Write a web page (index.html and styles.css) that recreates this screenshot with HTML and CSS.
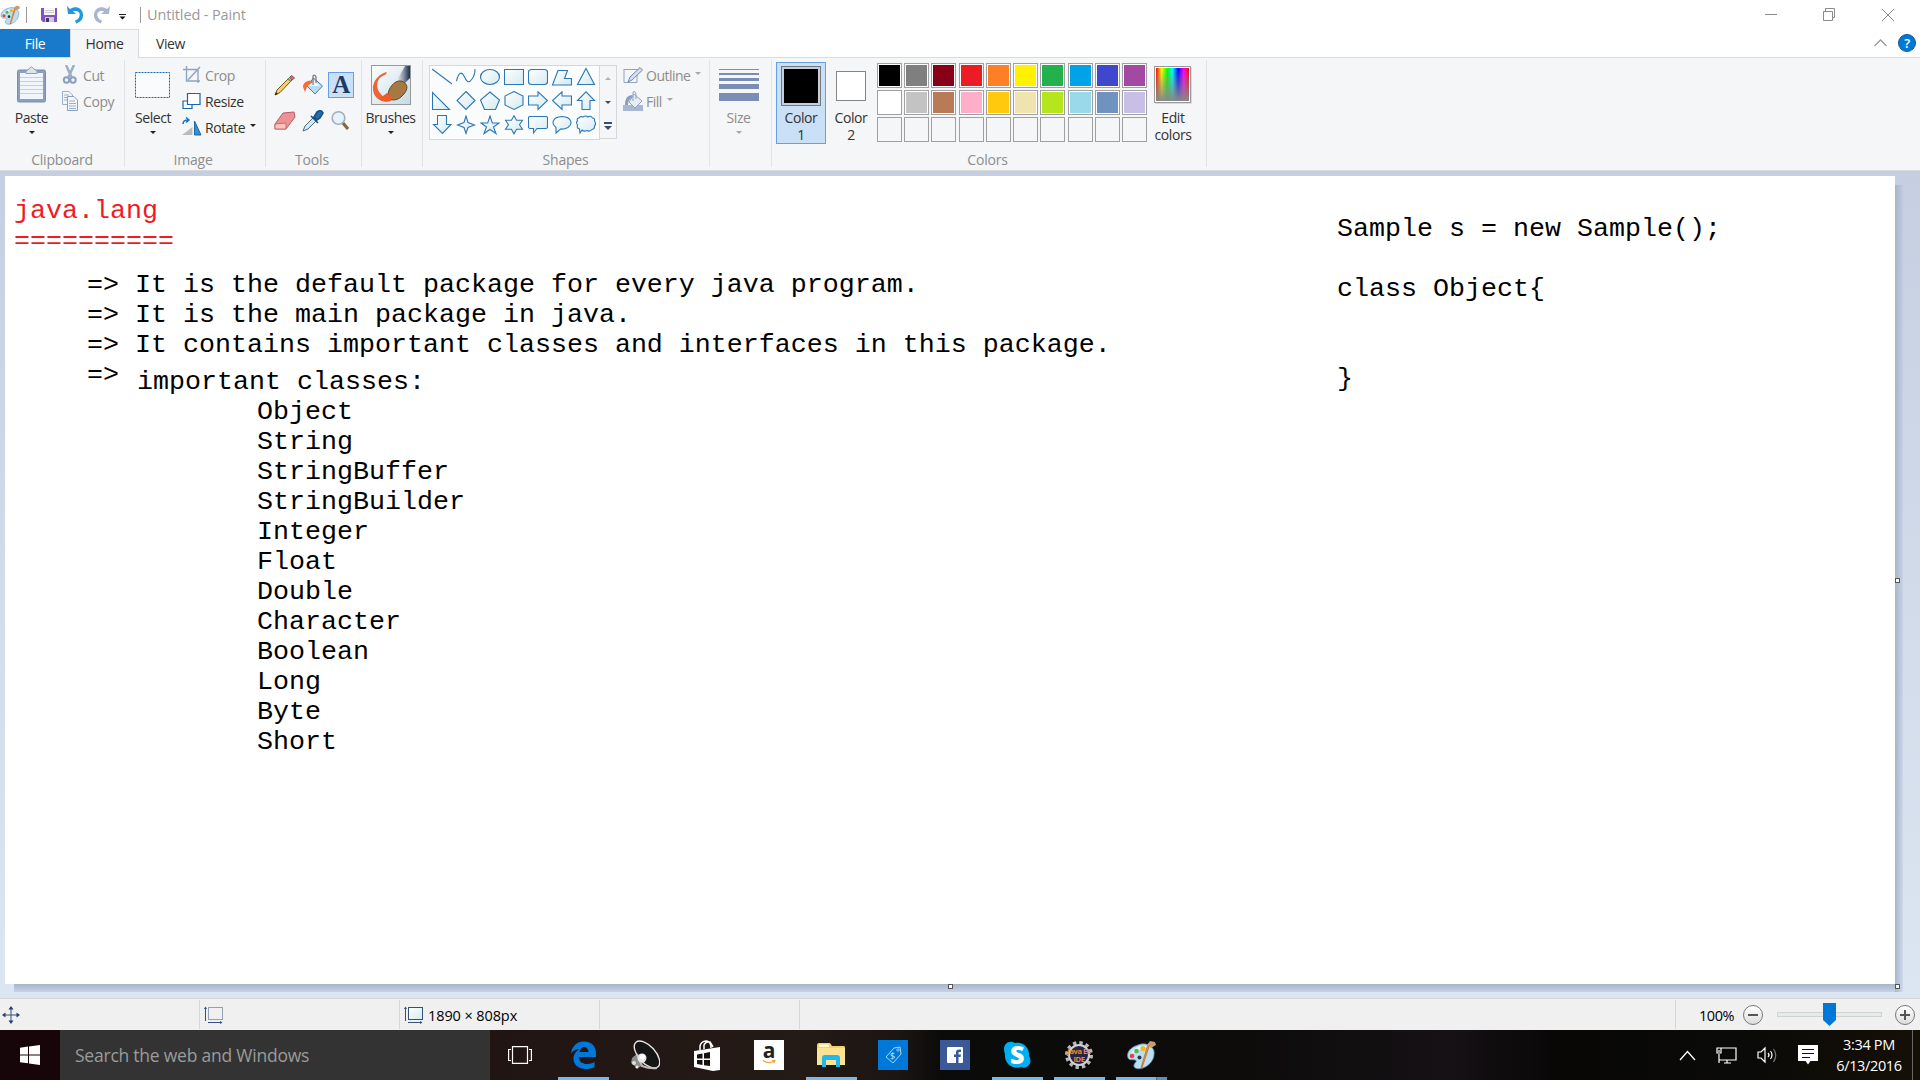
FILE: index.html
```html
<!DOCTYPE html>
<html lang="en">
<head>
<meta charset="utf-8">
<title>Untitled - Paint</title>
<link rel="stylesheet" href="styles.css">
</head>
<body>
<svg width="0" height="0" class="defs">
  <defs>
    <linearGradient id="shapeFill" x1="0" y1="0" x2="1" y2="1"><stop offset="0" stop-color="#fff"/><stop offset="1" stop-color="#d3eaf0"/></linearGradient>
    <linearGradient id="hue"><stop offset="0" stop-color="#f00"/><stop offset=".17" stop-color="#ff0"/><stop offset=".34" stop-color="#0f0"/><stop offset=".5" stop-color="#0ff"/><stop offset=".67" stop-color="#00f"/><stop offset=".84" stop-color="#f0f"/><stop offset="1" stop-color="#f00"/></linearGradient>
    <linearGradient id="fade" x1="0" y1="0" x2="0" y2="1"><stop offset="0" stop-color="#888" stop-opacity="0"/><stop offset="1" stop-color="#888"/></linearGradient>
    <linearGradient id="brushBg" x1="0" y1="0" x2="1" y2="1"><stop offset="0" stop-color="#fff"/><stop offset="1" stop-color="#c4dbe5"/></linearGradient>
    <linearGradient id="metal"><stop offset="0" stop-color="#eee"/><stop offset=".5" stop-color="#8995a5"/><stop offset="1" stop-color="#182b48"/></linearGradient>
    <symbol id="palette" viewBox="0 0 30 30">
      <path d="M2 18C0 12 5 7 12 5C19 2 26 5 28 11C29 18 25 25 17 28C12 30 7 28 8 25C9 22 12 21 9 20C6 19 4 21 2 18Z" fill="#badff3" stroke="#5c8fb0" stroke-width=".8"/>
      <path d="M5 14C8 7 16 4 23 7C18 8 12 10 5 14Z" fill="#e6f6fd"/>
      <circle cx="13.500" cy="17.500" r="2" fill="#26394a"/>
      <circle cx="6" cy="16" r="2.300" fill="#e8433d"/><circle cx="10.500" cy="11" r="2.300" fill="#54b848"/><circle cx="17" cy="8.500" r="2.600" fill="#f4b42b"/>
      <path d="M24 4L16 28L15 29L15.500 26L22 4Z" fill="#ef9128" stroke="#b55b14" stroke-width=".6"/>
      <path d="M21 5L24 1L29 2L30 5L25 8Z" fill="#c39c72"/>
    </symbol>
  </defs>
</svg>
<div class="screen">
  <header class="titlebar">
    <svg class="app-icon" width="20" height="20"><use href="#palette"/></svg>
    <i class="vline"></i>
    <svg class="save" width="17" height="16" viewBox="0 0 17 16"><path d="M0 1H16V15H2L0 13Z" fill="#7e57b8"/><path d="M3 1H14V8H3Z" fill="#f6f3fa"/><path d="M4 3.500H13M4 5.500H13" stroke="#ccc"/><path d="M4 10H13V15H4Z" fill="#cfc9d8"/><path d="M5 11H8V15H5Z" fill="#4a356f"/></svg>
    <svg class="undo" width="17" height="19" viewBox="0 0 17 19"><path d="M0 1L1 9H9L6 6.500C11 5 13.500 8 12.500 11C12 13.500 10 15 8 15.500L9 18.500C14 17 16.500 13.500 16 9C15 3 9 0 3 4Z" fill="#2298dc"/></svg>
    <svg class="redo" width="17" height="19" viewBox="0 0 17 19"><path d="M17 1L16 9H8L11 6.500C6 5 3.500 8 4.500 11C5 13.500 7 15 9 15.500L8 18.500C3 17 .5 13.500 1 9C2 3 8 0 14 4Z" fill="#a8b6cf"/></svg>
    <svg class="qat" width="8" height="6" viewBox="0 0 8 6"><path d="M0 .5H7" stroke="#222"/><path d="M.5 2.500H6.500L3.500 5.500Z" fill="#111"/></svg>
    <i class="vline"></i>
    <span class="title">Untitled - Paint</span>
    <svg class="winctl" width="130" height="14" viewBox="0 0 130 14" fill="none" stroke="#8a8a8a"><path d="M0 6.500H12M60.500 1.500V.5H69.500V9.500H68M58.500 3.500H67.500V12.500H58.500ZM60.500 3V.5M117 1L129 13M129 1L117 13"/></svg>
  </header>

  <nav class="tabs">
    <span class="tab file">File</span><span class="tab home">Home</span><span class="tab view">View</span>
    <svg class="chev" width="13" height="8" viewBox="0 0 13 8"><path d="M.5 7L6.500 1L12.500 7" fill="none" stroke="#999" stroke-width="1.300"/></svg>
    <span class="help">?</span>
  </nav>

  <section class="ribbon">
    <div class="group clipboard">
      <div class="body">
        <div class="big paste"><span class="ico"><svg width="32" height="38" viewBox="0 0 32 38"><rect x="1.500" y="4" width="28" height="32" rx="1.500" fill="#8e9fbe" stroke="#7c8fb1"/><path d="M4 7H27V33H4Z" fill="#f0f4fb"/><path d="M4 11.500H27M4 15.500H27M4 19.500H27M4 23.500H27M4 27.500H27" stroke="#c3cfe2"/><path d="M10 7.500V5Q12 4 13 3Q15.500 -1 18 3Q19 4 21 5V7.500Z" fill="#dce4f0" stroke="#8e9fbe"/></svg></span><span>Paste</span><i class="arr"></i></div>
        <div class="rows">
          <div class="row off"><svg width="18" height="20" viewBox="0 0 18 20"><path d="M5 0L10.500 12M13 0L7.500 12" stroke="#9badc9" stroke-width="2.500"/><circle cx="5.500" cy="15" r="2.700" fill="none" stroke="#8a9ebf" stroke-width="2"/><circle cx="12" cy="15" r="2.700" fill="none" stroke="#8a9ebf" stroke-width="2"/></svg><span>Cut</span></div>
          <div class="row off copyrow"><svg width="18" height="20" viewBox="0 0 18 20"><path d="M1.500 .5H8L11.500 4V13.500H1.500Z" fill="#f3f6fb" stroke="#9badc9"/><path d="M3 4H8M3 6.500H9M3 9H9" stroke="#9badc9"/><path d="M6.500 5.500H13L16.500 9V19.500H6.500Z" fill="#f3f6fb" stroke="#8a9ebf"/><path d="M8 10H14M8 12.500H15M8 15H15M8 17.500H15" stroke="#9badc9"/></svg><span>Copy</span></div>
        </div>
      </div>
      <div class="label">Clipboard</div>
    </div>

    <div class="group image">
      <div class="body">
        <div class="big select"><span class="ico"><svg width="36" height="28" viewBox="0 0 36 28"><rect x=".5" y="1.500" width="34" height="25" fill="#f9fbfd" stroke="#1767ad" stroke-dasharray="2 1"/></svg></span><span>Select</span><i class="arr"></i></div>
        <div class="rows">
          <div class="row off"><svg width="20" height="20" viewBox="0 0 20 20" fill="none" stroke="#8fa3c4" stroke-width="1.400"><path d="M1 4.500H16V18M4.500 1V16H18M6 15L18 2"/></svg><span>Crop</span></div>
          <div class="row"><svg width="20" height="18" viewBox="0 0 20 18" fill="#fff" stroke="#1767ad" stroke-width="1.200"><path d="M1 9H10V16.500H1Z"/><path d="M5.500 1.500H18V12.500H5.500Z"/></svg><span>Resize</span></div>
          <div class="row"><svg width="20" height="20" viewBox="0 0 20 20"><path d="M0 18L10.500 10V18Z" fill="#bbb"/><path d="M12.500 4V18H19Z" fill="#3d8fc4" stroke="#1767ad"/><path d="M1 7C1 4 3 3 6 3M4 .5L7 3L4 5.500" fill="none" stroke="#1775c4" stroke-width="1.500"/></svg><span>Rotate</span><i class="arr"></i></div>
        </div>
      </div>
      <div class="label">Image</div>
    </div>

    <div class="group tools">
      <div class="toolgrid">
        <span><svg width="22" height="22" viewBox="0 0 22 22"><path d="M1 21L3 16L15.500 3.500L18 6L6 18.500Z" fill="#f6cf6b" stroke="#72531d"/><path d="M15.500 3.500L17.500 1.500L20.500 4L18 6Z" fill="#d7656c" stroke="#85555a"/><path d="M14 4.500L17 7.500" stroke="#69927b" stroke-width="1.500"/><path d="M1 21L2 18L4 20Z" fill="#222"/></svg></span>
        <span><svg width="22" height="22" viewBox="0 0 22 22"><path d="M11.500 4L20.500 12L13 20L5 12Z" fill="#b8dcf1" stroke="#55799a"/><path d="M7 12L12 6L18 12Z" fill="#edf8fe"/><path d="M11 11V2Q13 0 14 3V9" fill="none" stroke="#777" stroke-width="1.200"/><path d="M10 7C5 6 1 9 1 13L3 18L5 13Q6 10 10 9Z" fill="#f46e35"/></svg></span>
        <span class="textool">A</span>
        <span><svg width="22" height="20" viewBox="0 0 22 20"><path d="M9 2L20 1L21 6L12 18L1 18L1 13Z" fill="#ed9293" stroke="#b65e65"/><path d="M1 13L12 12L12 18L1 18Z" fill="#fbc3bb" stroke="#c96f70"/></svg></span>
        <span><svg width="22" height="22" viewBox="0 0 22 22"><path d="M1 21L3 16L11 8L14 11L6 19Z" fill="#d8e8f1" stroke="#456b8a"/><path d="M9 6L16 13M12 7L15 2Q19 -1 21 3L18 8L15 10Z" fill="#286da8" stroke="#175285" stroke-width="1.600"/></svg></span>
        <span><svg width="22" height="22" viewBox="0 0 22 22"><path d="M12.500 12.500L18 19" stroke="#85663d" stroke-width="3.200"/><circle cx="8.500" cy="8" r="6.300" fill="#e4f3fd" stroke="#a3aeba" stroke-width="1.600"/></svg></span>
      </div>
      <div class="label">Tools</div>
    </div>

    <div class="group brushes">
      <div class="big"><span class="ico"><svg width="40" height="40" viewBox="0 0 40 40"><rect x=".5" y=".5" width="39" height="39" fill="url(#brushBg)" stroke="#989898"/><path d="M26 15L34 1H39V13L32 20Z" fill="url(#metal)"/><path d="M16 7C9 8 1 16 2 25C3 33 10 38 18 36L13 32C7 28 4 20 8 14C11 10 15 11 16 7Z" fill="#ec6534"/><path d="M17 30C17 24 23 15 30 16C37 18 38 24 32 30C27 36 20 36 17 33Z" fill="#a87842" stroke="#664523"/><path d="M12 31L16 28Q21 31 20 36Q13 38 8 34Z" fill="#ef5a26"/></svg></span><span>Brushes</span><i class="arr"></i></div>
    </div>

    <div class="group shapes">
      <div class="body">
        <div class="gallery">
          <svg viewBox="0 0 20 20"><path d="M0 2L20 17"/></svg>
          <svg viewBox="0 0 20 20"><path class="open" d="M.5 14C3 4 6 5 8 9S12 18 16 12Q19 8 19 2"/></svg>
          <svg viewBox="0 0 20 20"><ellipse cx="10" cy="10" rx="9.500" ry="7.500"/></svg>
          <svg viewBox="0 0 20 20"><path d="M.5 2.500H19.500V17.500H.5Z"/></svg>
          <svg viewBox="0 0 20 20"><rect x=".5" y="2.500" width="19" height="15" rx="3"/></svg>
          <svg viewBox="0 0 20 20"><path d="M6 3.500H15.500L12.500 11.500H19.500V18H.5Z"/></svg>
          <svg viewBox="0 0 20 20"><path d="M10 1.500L18.500 17.500H1.500Z"/></svg>
          <svg viewBox="0 0 20 20"><path d="M.5 1.500V18.500H17.500Z"/></svg>
          <svg viewBox="0 0 20 20"><path d="M10 .5L19 9.500L10 18.500L1 9.500Z"/></svg>
          <svg viewBox="0 0 20 20"><path d="M10 1L19.500 9L15.500 18.500H4.500L.5 9Z"/></svg>
          <svg viewBox="0 0 20 20"><path d="M10 .5L19 5V14L10 18.500L1 14V5Z"/></svg>
          <svg viewBox="0 0 20 20"><path d="M.5 5H10V.8L19.500 9.500L10 18.500V14H.5Z"/></svg>
          <svg viewBox="0 0 20 20"><path d="M19.500 5H10V.8L.5 9.500L10 18.500V14H19.500Z"/></svg>
          <svg viewBox="0 0 20 20"><path d="M6 18.500V9.500H1.500L10 .8L18.500 9.500H14V18.500Z"/></svg>
          <svg viewBox="0 0 20 20"><path d="M5.500 .5H14.500V9.500H19L10.500 18.500L1.500 9.500H5.500Z"/></svg>
          <svg viewBox="0 0 20 20"><path d="M10 1L12 7.500L18.500 10L12 12.500L10 18.500L8 12.500L1.500 10L8 7.500Z"/></svg>
          <svg viewBox="0 0 20 20"><path d="M10 1L12.300 8H19L13.500 12L16 18.500L10 14.500L4 18.500L6.500 12L1 8H7.700Z"/></svg>
          <svg viewBox="0 0 20 20"><path d="M10 .8L12.600 5.200H18.500L15.500 9.800L18.500 14.300H12.600L10 18.800L7.400 14.300H1.500L4.500 9.800L1.500 5.200H7.400Z"/></svg>
          <svg viewBox="0 0 20 20"><path d="M2 1.500H18Q19.500 1.500 19.500 3V12Q19.500 13.500 18 13.500H9L5.500 18V13.500H2Q.5 13.500 .5 12V3Q.5 1.500 2 1.500Z"/></svg>
          <svg viewBox="0 0 20 20"><path d="M4 12.500C-1 9 0 2 10 1.500C20 2 21 9 16 12.500Q12 14.500 8.500 14L4 18Z"/></svg>
          <svg viewBox="0 0 20 20"><path d="M3 3Q4 1 7 2Q10 0 12 2Q15 0 16.500 3Q19 3 18.500 6Q20.500 9 18.500 11Q19 14 16 14.500Q14 17 11 15.500Q8 17 6 15L4 18L3.500 14Q.5 13.500 1.500 10Q-.5 7 1.500 6Q.5 3 3 3Z"/></svg>
        </div>
        <div class="scroll"><i class="arr up"></i><i class="arr"></i><i class="arr more"></i></div>
        <div class="rows">
          <div class="row off"><svg width="20" height="18" viewBox="0 0 20 18"><path d="M1 3.500H16M1 3V16.500H14V7" fill="none" stroke="#8fa3c4"/><path d="M5 16L7 11L17 1.500L19.500 4L9 14Z" fill="#d4deed" stroke="#7389af"/></svg><span>Outline</span><i class="arr"></i></div>
          <div class="row off fillrow"><svg width="20" height="20" viewBox="0 0 20 20"><path d="M0 14H20V20H0Z" fill="#a9b7d0"/><path d="M11 3L19 10L12 17L6 11Z" fill="#e5edf7" stroke="#8fa3c4"/><path d="M10 10V1Q12 -1 13 3V8" fill="none" stroke="#8fa3c4"/><path d="M9 4Q2 4 2 14H5Q5 8 9 7Z" fill="#8a9ebf"/></svg><span>Fill</span><i class="arr"></i></div>
        </div>
      </div>
      <div class="label">Shapes</div>
    </div>

    <div class="group size">
      <div class="big off"><span class="ico"><svg width="40" height="34" viewBox="0 0 40 34" fill="#7a8db2"><path d="M0 1H40V2H0ZM0 5H40V7H0ZM0 10H40V13H0ZM0 16H40V21H0ZM0 25H40V33H0Z"/></svg></span><span>Size</span><i class="arr"></i></div>
    </div>

    <div class="group colors">
      <div class="body">
        <div class="big color sel"><span class="ico"><b class="sw one"></b></span><span>Color</span><span>1</span></div>
        <div class="big color"><span class="ico"><b class="sw two"></b></span><span>Color</span><span>2</span></div>
        <div class="swatches">
          <i class="c-black"></i><i class="c-gray"></i><i class="c-maroon"></i><i class="c-red"></i><i class="c-orange"></i><i class="c-yellow"></i><i class="c-green"></i><i class="c-azure"></i><i class="c-indigo"></i><i class="c-purple"></i>
          <i class="c-white"></i><i class="c-silver"></i><i class="c-brown"></i><i class="c-rose"></i><i class="c-gold"></i><i class="c-cream"></i><i class="c-lime"></i><i class="c-sky"></i><i class="c-steel"></i><i class="c-lavender"></i>
          <i></i><i></i><i></i><i></i><i></i><i></i><i></i><i></i><i></i><i></i>
        </div>
        <div class="big edit"><span class="ico"><svg width="38" height="38" viewBox="0 0 38 38"><rect x="1.500" y="1.500" width="36" height="36" fill="#bbb"/><rect x=".5" y=".5" width="36" height="36" fill="#fff" stroke="#999"/><path d="M2 2H35V35H2Z" fill="url(#hue)"/><path d="M2 2H35V35H2Z" fill="url(#fade)"/></svg></span><span>Edit</span><span>colors</span></div>
      </div>
      <div class="label">Colors</div>
    </div>
  </section>

  <main class="workspace">
    <div class="canvas">
      <pre class="note red at-title">java.lang
==========</pre>
      <pre class="note at-points">=&gt; It is the default package for every java program.
=&gt; It is the main package in java.
=&gt; It contains important classes and interfaces in this package.</pre>
      <pre class="note at-arrow">=&gt;</pre>
      <pre class="note at-classes">important classes:</pre>
      <pre class="note at-list">Object
String
StringBuffer
StringBuilder
Integer
Float
Double
Character
Boolean
Long
Byte
Short</pre>
      <pre class="note at-code">Sample s = new Sample();

class Object{


}</pre>
      <i class="shade right"></i><i class="shade bottom"></i>
      <i class="handle h-right"></i><i class="handle h-bottom"></i><i class="handle h-corner"></i>
    </div>
  </main>

  <footer class="status">
    <div class="cell pos"><svg width="18" height="18" viewBox="0 0 18 18"><path d="M9 1V17M1 9H17" stroke="#33517d"/><path d="M9 0L11.500 3.500H6.500ZM9 18L11.500 14.500H6.500ZM0 9L3.500 6.500V11.500ZM18 9L14.500 6.500V11.500Z" fill="#24416e"/></svg></div>
    <div class="cell"><svg width="20" height="18" viewBox="0 0 20 18" fill="none" stroke="#33517d"><path d="M1.500 2V15M4 16.500H18"/><path d="M0 3L1.500 .5L3 3ZM16 15L18.500 16.500L16 18Z" fill="#33517d" stroke="none"/><rect x="4.500" y="1.500" width="14" height="12" stroke-dasharray="1 1"/></svg></div>
    <div class="cell"><svg width="20" height="18" viewBox="0 0 20 18" fill="none" stroke="#33517d"><path d="M1.500 2V15M4 16.500H18"/><path d="M0 3L1.500 .5L3 3ZM16 15L18.500 16.500L16 18Z" fill="#33517d" stroke="none"/><rect x="4.500" y="1.500" width="14" height="12" fill="url(#shapeFill)"/></svg><span class="dims">1890 × 808px</span></div>
    <div class="cell"></div>
    <div class="cell grow"></div>
    <div class="zoom"><span class="pct">100%</span><span class="knob"><svg width="10" height="10" viewBox="0 0 10 10"><path d="M0 5H10" stroke="#555" stroke-width="2"/></svg></span><span class="track"><svg class="thumb" width="13" height="23" viewBox="0 0 13 23"><path d="M0 0H13V17L6.500 23L0 17Z" fill="#0078d7"/></svg></span><span class="knob"><svg width="10" height="10" viewBox="0 0 10 10"><path d="M0 5H10M5 0V10" stroke="#555" stroke-width="2"/></svg></span></div>
  </footer>

  <footer class="taskbar">
    <div class="start"><svg width="20" height="20" viewBox="0 0 20 20" fill="#fff"><path d="M0 2.800L8 1.600V9.400H0ZM9 1.500L20 0V9.400H9ZM0 10.400H8V18.300L0 17.200ZM9 10.400H20V20L9 18.500Z"/></svg></div>
    <div class="search">Search the web and Windows</div>
    <div class="slot view-slot"><svg width="24" height="18" viewBox="0 0 24 18" fill="none" stroke="#fff" stroke-width="1.200"><path d="M4.500 .6H19.500V17.400H4.500ZM3 3.500H.6V14.500H3M21 3.500H23.400V14.500H21"/></svg></div>
    <div class="slot run"><svg width="25" height="28" viewBox="0 0 25 28"><path d="M0 12.500C1 5 6 .5 13 .5C21 .5 25 6 25 12.500V16H8C8 21 12 23 16 23C19 23 21.500 22 23.500 21V26C21 27.500 18 28 15 28C7 28 2.500 23.500 2.500 17.500C2.500 13.500 5 10 9 8C5 8 2 9.500 0 12.500ZM8.500 11H17.500C17.500 8 15.500 6 13 6C10.500 6 9 8 8.500 11Z" fill="#0078d7" fill-rule="evenodd"/></svg></div>
    <div class="slot"><svg width="30" height="30" viewBox="0 0 30 30"><path d="M2 18L8 13L13 19L12 26L7 28L1 23Z" fill="#8d8d8d"/><ellipse cx="17" cy="14.500" rx="8.500" ry="16.500" transform="rotate(-42 17 14.500)" fill="#151515" stroke="#e4e4e4" stroke-width="1.400"/><path d="M7 14L12 26Q20 29 27 28" fill="none" stroke="#bbb" stroke-width="2"/><circle cx="12" cy="18" r="4.500" fill="#e8e8e8"/><circle cx="12.500" cy="17" r="2.500" fill="#fff"/><circle cx="4" cy="23" r="2" fill="#ddd"/><circle cx="7" cy="27" r="1.600" fill="#eee"/></svg></div>
    <div class="slot"><svg width="27" height="31" viewBox="0 0 27 31"><path d="M0 11L26 7V30L19 31L0 27Z" fill="#fff"/><path d="M6 10V6Q7 1 13 1Q17 2 17 8M10 9V5Q12 1 16 2L19 7" fill="none" stroke="#fff" stroke-width="1.500"/><path d="M3 14.500L8.500 13.500V18.500H3ZM10 13.200L16 12V18.500H10ZM3 20H8.500V25L3 24ZM10 20H16V26L10 25.200Z" fill="#16100f"/></svg></div>
    <div class="slot"><span class="tile amazon"><b>a</b><svg width="14" height="4" viewBox="0 0 14 4"><path d="M1 .5Q7 4.500 12 1M10 .5H13L12 3" fill="none" stroke="#f9a13a" stroke-width="1.200"/></svg></span></div>
    <div class="slot run"><svg width="28" height="24" viewBox="0 0 28 24"><path d="M0 2Q0 0 2 0H13L15 3H27Q28 3 28 5V22H0Z" fill="#f6d163"/><path d="M2 1.500H12V4H2Z" fill="#fff8d7"/><path d="M0 5H28V22H0Z" fill="#fce394"/><path d="M5 24V15Q5 12 8 12H20Q23 12 23 15V24H19V17H9V24Z" fill="#21b8ee"/></svg></div>
    <div class="slot"><span class="tile blue"><svg width="18" height="20" viewBox="0 0 18 20"><path d="M2 12L10 3L16 2L17 9L9 18Z" fill="none" stroke="#a3d8ff" stroke-width="1"/><circle cx="14" cy="5" r="1.200" fill="none" stroke="#a3d8ff" stroke-width=".8"/><text x="6" y="14" class="dollar">$</text></svg></span></div>
    <div class="slot"><span class="tile fb"><svg width="16" height="16" viewBox="0 0 16 16"><rect width="16" height="16" rx="1" fill="#fff"/><path d="M9 16V10H7V7.500H9V5.500Q9 2.500 12 2.500H14V5H12.500Q11.500 5 11.500 6V7.500H14L13.600 10H11.500V16Z" fill="#3b5998"/></svg></span></div>
    <div class="slot run"><span class="skype"><svg width="28" height="28" viewBox="0 0 28 28"><path d="M1 8C1 2 7-1 12 2C20 0 27 7 26 15C30 21 25 29 18 26C9 29 1 22 2 13Q1 11 1 8Z" fill="#00aff0"/></svg><b>S</b></span></div>
    <div class="slot run"><span class="java"><svg width="28" height="28" viewBox="0 0 28 28"><circle cx="14" cy="14" r="12" fill="none" stroke="#b9b9b9" stroke-width="4" stroke-dasharray="3.300 2.983"/><circle cx="14" cy="14" r="10" fill="#29224a" stroke="#d0d0d0" stroke-width="2"/></svg><b>Java EE<br>IDE</b></span></div>
    <div class="slot run paint"><svg width="30" height="30"><use href="#palette"/></svg></div>
    <div class="tray">
      <svg width="17" height="11" viewBox="0 0 17 11"><path d="M1 10L8.500 1.500L16 10" fill="none" stroke="#fff" stroke-width="1.300"/></svg>
      <svg width="21" height="17" viewBox="0 0 21 17" fill="none" stroke="#fff" stroke-width="1.200"><path d="M5 1H20V13H3M3 7V16M11 13V16M8 16H15M1 1H5V6H1ZM3 3V5"/></svg>
      <svg width="21" height="18" viewBox="0 0 21 18" fill="none" stroke="#fff" stroke-width="1.200"><path d="M1 6H4L8 2V16L4 12H1ZM11 7Q13 9 11 11M13.500 5Q16.500 9 13.500 13"/><path d="M16.500 3Q21 9 16.500 16" stroke="#777"/></svg>
      <svg width="20" height="20" viewBox="0 0 20 20"><path d="M0 0H20V16H12.500L10 19.500L7.500 16H0Z" fill="#fff"/><path d="M4 4.500H16M4 8.500H16M4 12.500H12" stroke="#111"/></svg>
    </div>
    <div class="clock"><span class="time">3:34 PM</span><span class="date">6/13/2016</span></div>
    <div class="peek"></div>
  </footer>
</div>
</body>
</html>
```
FILE: styles.css
```css
* { box-sizing: border-box; }
body { margin: 0; font-family: "Open Sans", "Noto Sans", sans-serif; font-size: 14px; letter-spacing: -0.42px; line-height: 17px; color: #333; background: #fff; }
svg { display: block; flex: none; }
i, b { display: block; font-style: normal; }
.defs { position: absolute; }
.screen { width: 1920px; height: 1080px; overflow: hidden; display: flex; flex-direction: column; }

/* Title bar */
.titlebar { height: 29px; display: flex; align-items: center; }
.app-icon { margin-right: 6px; }
.vline { width: 1px; height: 16px; background: #999; }
.save { margin-left: 14px; }
.undo { margin-left: 9px; }
.redo { margin-left: 9px; }
.qat { margin: 4px 13px 0 9px; }
.title { margin-left: 6px; font-size: 14.5px; letter-spacing: -0.12px; color: #999; }
.winctl { margin-left: auto; margin-right: 25px; }

/* Tabs */
.tabs { height: 29px; display: flex; align-items: center; border-bottom: 1px solid #dadbdc; }
.tab { height: 29px; line-height: 29px; text-align: center; }
.file { width: 70px; color: #fff; background: #1979ca; height: 28px; align-self: flex-start; }
.home { width: 69px; background: #f5f6f7; border: 1px solid #dadbdc; border-bottom: 0; line-height: 28px; }
.view { width: 63px; }
.chev { margin-left: auto; }
.help { width: 18px; height: 18px; margin: 0 4px 0 11px; border-radius: 50%; background: #0078d7; border: 1px solid #155a94; color: #fff; font-weight: 600; text-align: center; line-height: 16px; font-size: 13px; }

/* Ribbon */
.ribbon { height: 113px; display: flex; background: #f5f6f7; border-bottom: 1px solid #d8d9db; }
.group { height: 107px; margin-top: 2px; border-right: 1px solid #e2e3e4; display: flex; flex-direction: column; }
.body { display: flex; }
.label { margin: auto 0 -1px; text-align: center; color: #8d8d8d; letter-spacing: -0.2px; }
.big { display: flex; flex-direction: column; align-items: center; }
.ico { height: 49px; display: flex; align-items: center; justify-content: center; }
.arr { width: 0; height: 0; border: 3px solid transparent; border-top: 3px solid #222; border-bottom: 0; }
.big .arr { margin-top: 5px; }
.off { color: #8d8d8d; }
.off .arr { border-top-color: #aaa; }
.rows { padding-top: 2px; }
.row { height: 26px; display: flex; align-items: center; gap: 5px; }

.clipboard { width: 125px; }
.paste { width: 63px; }
.clipboard .rows { margin-left: -2px; }
.clipboard .row { gap: 4px; }
.image { width: 141px; }
.select { width: 36px; margin-left: 10px; }
.image .rows { margin-left: 11px; }
.image .row { gap: 3px; }
.image .row .arr { margin-left: 2px; margin-top: -3px; }
.image .label { margin-right: 4px; }
.tools { width: 96px; padding-left: 5px; }
.toolgrid { display: grid; grid-template-columns: 28px 28px 28px; grid-template-rows: 26px 36px; padding-top: 12px; row-gap: 5px; }
.toolgrid span { display: flex; align-items: center; justify-content: center; }
.toolgrid .textool { width: 26px; height: 26px; margin-left: 1px; background: #c9e0f7; border: 1px solid #62a2e4; font: bold 25px/24px "Liberation Serif", serif; color: #1f3864; }
.tools .label { margin-left: -8px; }
.brushes { width: 61px; }
.brushes .big { margin-left: -3px; }
.brushes .ico { padding-top: 1px; }

.shapes { width: 287px; }
.shapes .body { padding-left: 6px; }
.shapes .label { margin-right: 1px; }
.gallery { width: 171px; height: 75px; margin-top: 5px; padding: 1px 0 0 2px; background: #fbfcfd; border: 1px solid #d5d7d9; display: grid; grid-template-columns: repeat(7, 24px); grid-template-rows: repeat(3, 24px); }
.gallery svg { width: 20px; height: 20px; fill: url(#shapeFill); stroke: #2c77b5; stroke-width: 1.1; }
.gallery .open { fill: none; }
.scroll { width: 17px; height: 74px; margin-top: 5px; border: 1px solid #d5d7d9; border-left: 0; display: flex; flex-direction: column; align-items: center; padding-top: 11px; }
.scroll .arr { border-top-color: #3a4f6d; margin-bottom: 21px; }
.scroll .up { border: 3px solid transparent; border-top: 0; border-bottom: 3px solid #b0b4ba; }
.scroll .more { width: 8px; height: 8px; border: 0; border-top: 2px solid #3a4f6d; background: conic-gradient(from -45deg at 50% 100%, #3a4f6d 90deg, transparent 0) 0 2px / 8px 4px no-repeat; transform-origin: center; clip-path: polygon(0 0, 100% 0, 100% 50%, 50% 100%, 0 50%); margin: -3px 0 0; }
.shapes .rows { margin-left: 6px; }
.shapes .row { gap: 3px; }
.shapes .row span { letter-spacing: -0.5px; }
.shapes .row .arr { margin: -3px 0 0 2px; }
.size { width: 62px; }
.size .big { padding-right: 4px; }
.colors { width: 435px; }
.color { width: 50px; height: 82px; margin-top: 2px; border: 1px solid transparent; }
.color .ico { height: 46px; }
.sel { margin-left: 4px; background: #c9e0f7; border-color: #62a2e4; }
.sw { border: 1px solid #858585; background: #fff; }
.one { width: 40px; height: 40px; background: #000; border-color: #777; box-shadow: inset 0 0 0 2px #c5cedd; }
.two { width: 30px; height: 30px; }
.swatches { margin: 3px 0 0 1px; display: grid; grid-template-columns: repeat(10, 25px); grid-template-rows: repeat(3, 25px); column-gap: 2.22px; row-gap: 2px; }
.swatches i { border: 1px solid #a0a0a0; }
.swatches i[class] { box-shadow: inset 0 0 0 1px #fff; }
.c-black { background: #000; }
.c-gray { background: #7f7f7f; }
.c-maroon { background: #880015; }
.c-red { background: #ed1c24; }
.c-orange { background: #ff7f27; }
.c-yellow { background: #fff200; }
.c-green { background: #22b14c; }
.c-azure { background: #00a2e8; }
.c-indigo { background: #3f48cc; }
.c-purple { background: #a349a4; }
.c-white { background: #fff; }
.c-silver { background: #c3c3c3; }
.c-brown { background: #b97a57; }
.c-rose { background: #ffaec9; }
.c-gold { background: #ffc90e; }
.c-cream { background: #efe4b0; }
.c-lime { background: #b5e61d; }
.c-sky { background: #99d9ea; }
.c-steel { background: #7092be; }
.c-lavender { background: #c8bfe7; }
.edit { width: 50px; margin-left: 1px; }
.colors .label { margin-right: 3px; }

/* Drawing area */
.workspace { height: 827px; padding: 5px; background: linear-gradient(#c5cfe1, #dce6f2); }
.canvas { position: relative; width: 1890px; height: 808px; background: #fff; }
.note { position: absolute; margin: 0; font: 26.67px/30px "Courier New", "Liberation Mono", monospace; letter-spacing: 0; color: #000; white-space: pre; }
.red { color: #ed1c24; }
.at-title { left: 9px; top: 20px; }
.at-points { left: 82px; top: 94px; }
.at-arrow { left: 82px; top: 184px; }
.at-classes { left: 132px; top: 191px; }
.at-list { left: 252px; top: 221px; }
.at-code { left: 1332px; top: 38px; }
.shade { position: absolute; }
.right { left: 1890px; top: 9px; width: 8px; height: 807px; background: linear-gradient(90deg, #a7b5cb, rgba(180, 193, 215, 0.3)); }
.bottom { left: 9px; top: 808px; width: 1881px; height: 8px; background: linear-gradient(#a7b5cb, #c7d3e4); }
.handle { position: absolute; width: 5px; height: 5px; border: 1px solid #555; background: #fff; }
.h-right { left: 1890px; top: 402px; }
.h-bottom { left: 943px; top: 808px; }
.h-corner { left: 1890px; top: 808px; }

/* Status bar */
.status { height: 32px; display: flex; align-items: center; background: #f0f0f0; border-top: 1px solid #d7d7d7; }
.cell { width: 200px; height: 29px; padding-left: 4px; border-right: 1px solid #d7d7d7; display: flex; align-items: center; }
.pos { padding-left: 2px; }
.grow { flex: 1; }
.dims, .pct { font-size: 14.5px; color: #000; letter-spacing: -0.45px; }
.dims { margin-left: 4px; padding-top: 2px; letter-spacing: -0.1px; }
.zoom { width: 244px; height: 29px; display: flex; align-items: center; padding-left: 23px; }
.pct { width: 44px; padding-top: 2px; }
.knob { width: 20px; height: 20px; border: 1px solid #777; border-radius: 50%; background: linear-gradient(#fff, #ddd); display: flex; align-items: center; justify-content: center; }
.track { position: relative; width: 105px; height: 5px; margin: 0 13px 0 14px; border: 1px solid #cfd4d2; background: #e7eaea; }
.thumb { position: absolute; left: 45px; top: -10px; }

/* Taskbar */
.taskbar { height: 50px; display: flex; align-items: center; background: linear-gradient(90deg, #170609 0, #170609 60px, #211513 500px, #241a16 800px, #1b1513 900px, #0b0b09 940px, #0d0c0b 1250px, #151115 1450px, #080706 1560px, #0a0a08 1750px, #151006 1920px); }
.start { width: 60px; display: flex; justify-content: center; }
.search { width: 430px; height: 50px; padding-left: 15px; line-height: 50px; background: #333; color: #9b9b9b; font-size: 17.5px; letter-spacing: -0.23px; }
.slot { width: 62px; height: 50px; display: flex; align-items: center; justify-content: center; }
.view-slot { padding-right: 2px; }
.run { background: linear-gradient(#76b9ed, #76b9ed) 6px 47px / 51px 3px no-repeat; }
.paint { background: linear-gradient(90deg, #76b9ed 40px, #47698a 40px, #47698a 41px, #628fb5 41px) 6px 47px / 51px 3px no-repeat; }
.tile { width: 30px; height: 30px; display: flex; flex-direction: column; align-items: center; justify-content: center; }
.amazon { background: #fff; }
.amazon b { font: bold 21px/15px "Open Sans", sans-serif; color: #222; margin-top: -3px; }
.amazon svg { margin-top: 2px; }
.blue { background: #0078d7; }
.dollar { font: 9px "Open Sans", sans-serif; fill: #c8e8ff; }
.fb { background: #3b5998; }
.skype, .java { display: grid; place-items: center; }
.skype > *, .java > * { grid-area: 1 / 1; }
.skype b { font: 800 25px/28px "Open Sans", sans-serif; color: #fff; margin-top: -2px; }
.java b { font: bold 7.5px/8px "Open Sans", sans-serif; color: #ee8a2c; text-align: center; letter-spacing: -0.4px; }
.tray { margin-left: auto; display: flex; align-items: center; gap: 20px; }
.clock { width: 88px; margin: -1px 0 0 7px; display: flex; flex-direction: column; align-items: center; color: #fff; font-size: 14.5px; letter-spacing: -0.35px; line-height: 21px; }
.peek { width: 8px; height: 50px; margin-left: -1px; border-left: 1px solid #666; }
```
